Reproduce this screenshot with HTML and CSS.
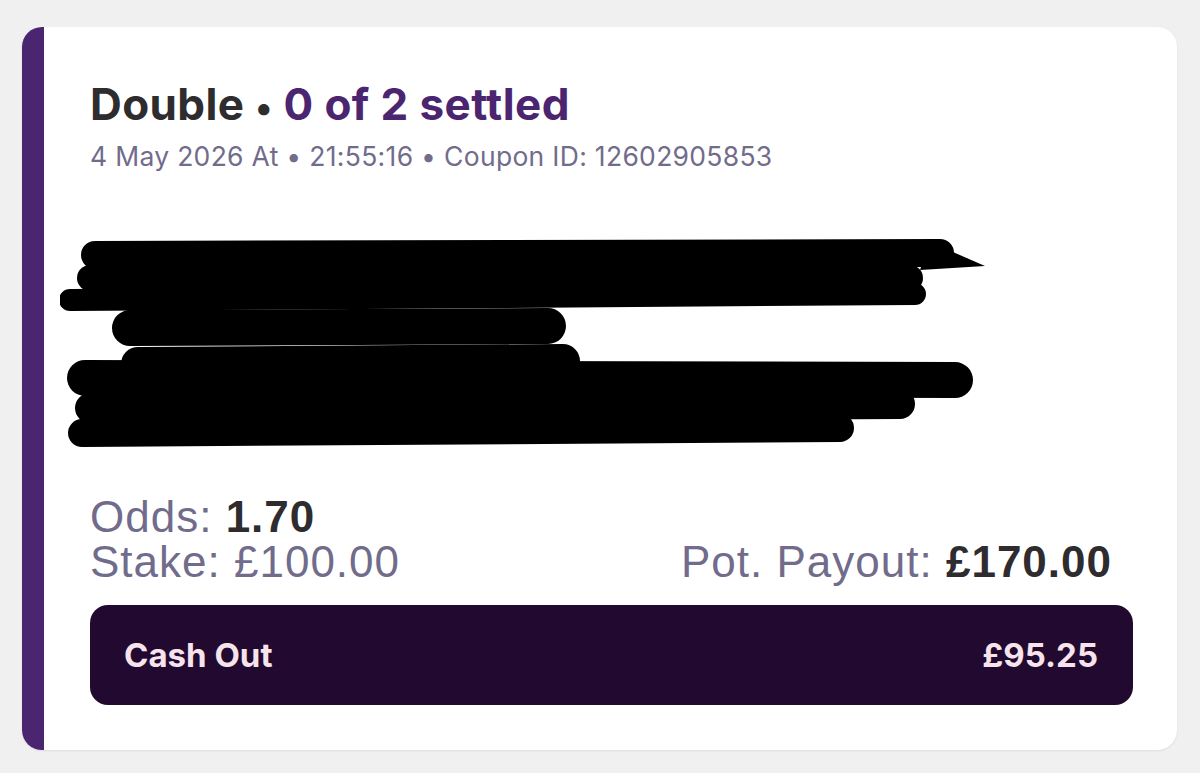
FILE: index.html
```html
<!DOCTYPE html>
<html>
<head>
<meta charset="utf-8">
<link rel="stylesheet" href="styles.css">
</head>
<body>
<div class="card">
  <div class="accent"></div>
  <div class="content">
    <h1 class="title"><span class="type">Double</span> <span class="dot">•</span> <span class="settled">0 of 2 settled</span></h1>
    <div class="meta">4 May 2026 At • 21:55:16 • Coupon ID: 12602905853</div>
    <svg class="redact" width="940" height="225" viewBox="0 0 940 225" aria-hidden="true">
      <g stroke="#000" stroke-linecap="round" fill="none">
        <path d="M35 27 L880 25" stroke-width="28"/>
        <path d="M30 50 L850 50" stroke-width="26"/>
        <path d="M10 72 L855 66" stroke-width="22"/>
        <path d="M70 100 L488 98" stroke-width="36"/>
        <path d="M78 136 L503 133" stroke-width="34"/>
        <path d="M25 150 L895 152" stroke-width="36"/>
        <path d="M30 180 L840 176" stroke-width="30"/>
        <path d="M22 205 L780 200" stroke-width="28"/>
      </g>
      <path d="M870 14 L925 38 L860 42 Z" fill="#000"/>
      <path d="M880 142 L912 150 L870 165 Z" fill="#000"/>
    </svg>
    <div class="figures">
      <div class="left">
        <div class="line">Odds: <b>1.70</b></div>
        <div class="line">Stake: £100.00</div>
      </div>
      <div class="line">Pot. Payout: <b>£170.00</b></div>
    </div>
    <div class="cashout">
      <span>Cash Out</span>
      <span>£95.25</span>
    </div>
  </div>
</div>
</body>
</html>
```

FILE: styles.css
```css
html, body {
  margin: 0;
  padding: 0;
  background: #f0f0f0;
}
body {
  padding: 27px 23px 23px 22px;
}
.card {
  display: flex;
  height: 723px;
  background: #ffffff;
  border-radius: 20px;
  overflow: hidden;
  box-shadow: 0 1px 2px rgba(0,0,0,0.08);
}
.accent {
  width: 22px;
  flex: none;
  background: #4b2570;
}
.content {
  flex: 1;
  padding: 50px 44px 0 46px;
  display: flex;
  flex-direction: column;
}
.title {
  margin: 0;
  font-family: Inter, "Noto Sans", sans-serif;
  font-weight: 700;
  font-size: 44px;
  line-height: 54px;
  letter-spacing: 0.4px;
  color: #2e2c2f;
}
.settled {
  color: #4b2570;
}
.dot {
  font-size: 36px;
}
.meta {
  margin-top: 6px;
  font-family: Inter, "Noto Sans", sans-serif;
  font-size: 26.5px;
  line-height: 32px;
  letter-spacing: 0.3px;
  color: #716c8b;
}
.redact {
  display: block;
  margin: 56px 0 0 -30px;
}
.figures {
  margin-top: 41px;
  margin-right: 21px;
  display: flex;
  justify-content: space-between;
  align-items: flex-end;
  font-family: "Liberation Sans", Arial, sans-serif;
  font-size: 44px;
  color: #716c8b;
}
.line {
  line-height: 45px;
  letter-spacing: 1px;
}
.line b {
  color: #2e2c2f;
  font-weight: 700;
}
.cashout {
  margin-top: 21px;
  height: 100px;
  box-sizing: border-box;
  background: #21092f;
  border-radius: 18px;
  display: flex;
  justify-content: space-between;
  align-items: center;
  padding: 0 35px 0 34px;
  font-family: Inter, "Noto Sans", sans-serif;
  font-weight: 700;
  font-size: 33px;
  color: #f7e3ec;
}
```
